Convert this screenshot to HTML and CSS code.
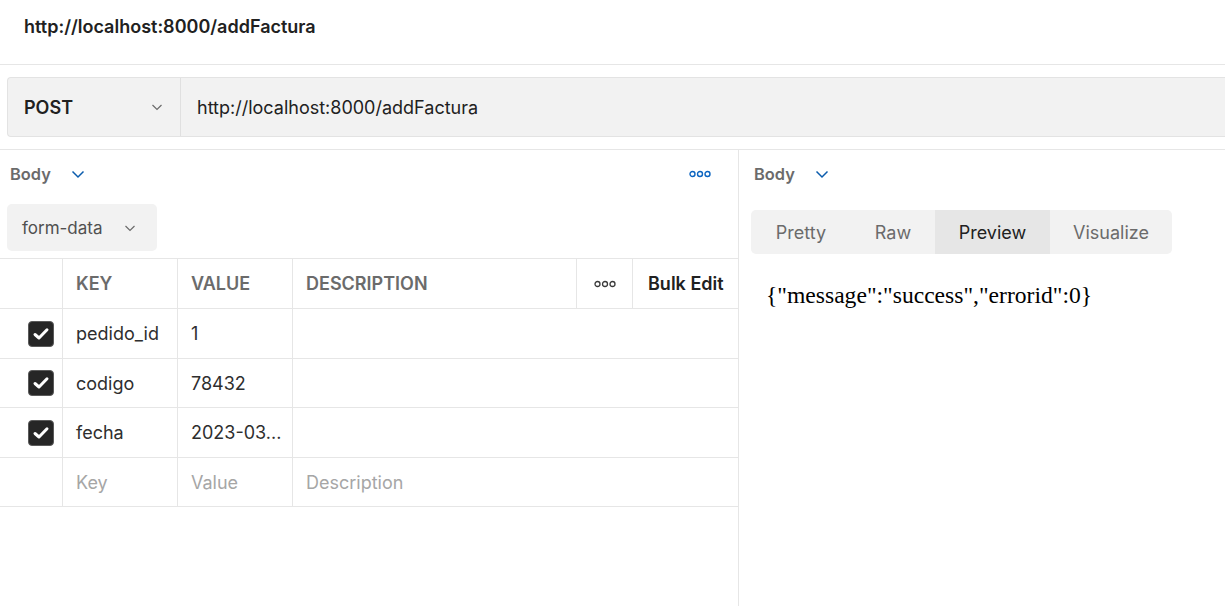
FILE: index.html
```html
<!DOCTYPE html>
<html lang="es">
<head>
<meta charset="utf-8">
<title>addFactura</title>
<link rel="stylesheet" href="styles.css">
</head>
<body>
<div class="app">
  <header class="title-bar">
    <span class="title">http://localhost:8000/addFactura</span>
  </header>
  <div class="request-row">
    <div class="url-bar">
      <div class="method">
        <span>POST</span>
        <svg class="chev" width="14" height="14" viewBox="0 0 14 14"><path d="M2.5 5 L7 9.5 L11.5 5" fill="none" stroke="#6b6b6b" stroke-width="1.2"/></svg>
      </div>
      <div class="url">http://localhost:8000/addFactura</div>
    </div>
  </div>
  <div class="panes">
    <section class="pane left">
      <div class="pane-head">
        <span class="label">Body</span>
        <svg class="chev blue" width="16" height="16" viewBox="0 0 16 16"><path d="M2.5 5.5 L8 11 L13.5 5.5" fill="none" stroke="#0b5cad" stroke-width="1.5"/></svg>
        <span class="spacer"></span>
        <svg class="dots" width="22" height="8" viewBox="0 0 22 8"><circle cx="3.5" cy="4" r="2.5" fill="none" stroke="#0b64c0" stroke-width="1.4"/><circle cx="11" cy="4" r="2.5" fill="none" stroke="#0b64c0" stroke-width="1.4"/><circle cx="18.5" cy="4" r="2.5" fill="none" stroke="#0b64c0" stroke-width="1.4"/></svg>
      </div>
      <div class="mode-row">
        <div class="mode">
          <span>form-data</span>
          <svg class="chev" width="14" height="14" viewBox="0 0 14 14"><path d="M2.5 5 L7 9.5 L11.5 5" fill="none" stroke="#6b6b6b" stroke-width="1.2"/></svg>
        </div>
      </div>
      <div class="table">
        <div class="tr head">
          <div class="td c-check"></div>
          <div class="td c-key">KEY</div>
          <div class="td c-val">VALUE</div>
          <div class="td c-desc">DESCRIPTION</div>
          <div class="td c-more"><svg width="22" height="8" viewBox="0 0 22 8"><circle cx="3.5" cy="4" r="2.5" fill="none" stroke="#3a3a3a" stroke-width="1.3"/><circle cx="11" cy="4" r="2.5" fill="none" stroke="#3a3a3a" stroke-width="1.3"/><circle cx="18.5" cy="4" r="2.5" fill="none" stroke="#3a3a3a" stroke-width="1.3"/></svg></div>
          <div class="td c-bulk">Bulk Edit</div>
        </div>
        <div class="tr r1">
          <div class="td c-check"><span class="box"><svg width="20" height="20" viewBox="0 0 20 20"><path d="M4 10.5 L8 14 L16 5.8" fill="none" stroke="#fff" stroke-width="3" stroke-linecap="round" stroke-linejoin="round"/></svg></span></div>
          <div class="td c-key">pedido_id</div>
          <div class="td c-val">1</div>
          <div class="td c-rest"></div>
        </div>
        <div class="tr r2">
          <div class="td c-check"><span class="box"><svg width="20" height="20" viewBox="0 0 20 20"><path d="M4 10.5 L8 14 L16 5.8" fill="none" stroke="#fff" stroke-width="3" stroke-linecap="round" stroke-linejoin="round"/></svg></span></div>
          <div class="td c-key">codigo</div>
          <div class="td c-val">78432</div>
          <div class="td c-rest"></div>
        </div>
        <div class="tr r3">
          <div class="td c-check"><span class="box"><svg width="20" height="20" viewBox="0 0 20 20"><path d="M4 10.5 L8 14 L16 5.8" fill="none" stroke="#fff" stroke-width="3" stroke-linecap="round" stroke-linejoin="round"/></svg></span></div>
          <div class="td c-key">fecha</div>
          <div class="td c-val">2023-03...</div>
          <div class="td c-rest"></div>
        </div>
        <div class="tr r4 placeholder">
          <div class="td c-check"></div>
          <div class="td c-key">Key</div>
          <div class="td c-val">Value</div>
          <div class="td c-rest">Description</div>
        </div>
      </div>
    </section>
    <section class="pane right">
      <div class="pane-head">
        <span class="label">Body</span>
        <svg class="chev blue" width="16" height="16" viewBox="0 0 16 16"><path d="M2.5 5.5 L8 11 L13.5 5.5" fill="none" stroke="#0b5cad" stroke-width="1.5"/></svg>
      </div>
      <div class="tabs">
        <span class="tab t-pretty">Pretty</span>
        <span class="tab t-raw">Raw</span>
        <span class="tab t-preview active">Preview</span>
        <span class="tab t-vis">Visualize</span>
      </div>
      <div class="preview">{"message":"success","errorid":0}</div>
    </section>
  </div>
</div>
</body>
</html>
```

FILE: styles.css
```css
* { box-sizing: border-box; }
html, body { margin: 0; padding: 0; background: #fff; }
body {
  font-family: Inter, "Noto Sans", sans-serif;
  font-size: 18px;
  color: #212121;
  width: 1225px;
  height: 606px;
  overflow: hidden;
}
.app { display: flex; flex-direction: column; height: 606px; }
.title-bar {
  height: 65px;
  border-bottom: 1px solid #e6e6e6;
  padding: 16px 0 0 24px;
}
.title { font-weight: 600; font-size: 18px; color: #212121; }
.request-row {
  padding: 12px 0 12px 7px;
  border-bottom: 1px solid #e6e6e6;
}
.url-bar {
  display: flex;
  height: 60px;
  background: #f2f2f2;
  border: 1px solid #e3e3e3;
  border-right: none;
  border-radius: 4px 0 0 4px;
}
.method {
  width: 173px;
  display: flex;
  align-items: center;
  justify-content: space-between;
  padding: 0 16px 0 16px;
  border-right: 1px solid #e0e0e0;
  font-weight: 600;
}
.url { display: flex; align-items: center; padding-left: 16px; color: #212121; }
.panes { flex: 1; display: flex; }
.pane.left { width: 739px; border-right: 1px solid #e6e6e6; }
.pane.right { flex: 1; padding-left: 12px; }
.pane-head {
  height: 48px;
  display: flex;
  align-items: center;
  padding-left: 10px;
  font-size: 16.4px;
}
.pane.right .pane-head { padding-left: 3px; }
.label { font-weight: 600; color: #6b6b6b; }
.chev { display: block; }
.chev.blue { margin-left: 19px; }
.spacer { flex: 1; }
.dots { margin-right: 27px; }
.mode-row { padding: 6px 0 7px 7px; }
.mode {
  width: 150px;
  height: 47px;
  background: #f2f2f2;
  border-radius: 5px;
  display: flex;
  align-items: center;
  justify-content: space-between;
  padding: 0 20px 0 15px;
  color: #505050;
  font-size: 17px;
}
.table { border-top: 1px solid #e6e6e6; }
.tr {
  display: flex;
  height: 50px;
  border-bottom: 1px solid #e6e6e6;
}
.tr.r2, .tr.r4 { height: 49px; }
.td {
  display: flex;
  align-items: center;
  padding: 0 13px;
  border-right: 1px solid #e6e6e6;
  color: #2e2e2e;
  white-space: nowrap;
  overflow: hidden;
}
.td:last-child { border-right: none; }
.head .td { font-weight: 600; color: #6b6b6b; }
.c-check { width: 63px; justify-content: flex-end; padding: 0 8px 0 0; }
.c-key { width: 115px; }
.c-val { width: 115px; }
.c-desc { width: 284px; }
.c-more { width: 56px; justify-content: center; padding: 0; }
.head .c-bulk { flex: 1; color: #212121; padding: 0 0 0 15px; }
.c-rest { flex: 1; }
.placeholder .td { color: #a6a6a6; }
.box {
  width: 26px;
  height: 26px;
  border-radius: 4px;
  background: #262626;
  border: 1px solid #5a5a5a;
  display: flex;
  align-items: center;
  justify-content: center;
}
.tabs {
  display: inline-flex;
  margin-top: 12px;
  height: 44px;
  background: #f2f2f2;
  border-radius: 5px;
  overflow: hidden;
  font-size: 18px;
}
.tab {
  display: flex;
  align-items: center;
  justify-content: center;
  color: #6b6b6b;
}
.t-pretty { width: 100px; }
.t-raw { width: 84px; }
.t-preview { width: 115px; }
.t-vis { width: 122px; }
.tab.active { background: #e6e6e6; color: #212121; }
.preview {
  font-family: "Liberation Serif", "Times New Roman", serif;
  font-size: 23.6px;
  color: #000;
  padding: 28px 0 0 15px;
}
```
